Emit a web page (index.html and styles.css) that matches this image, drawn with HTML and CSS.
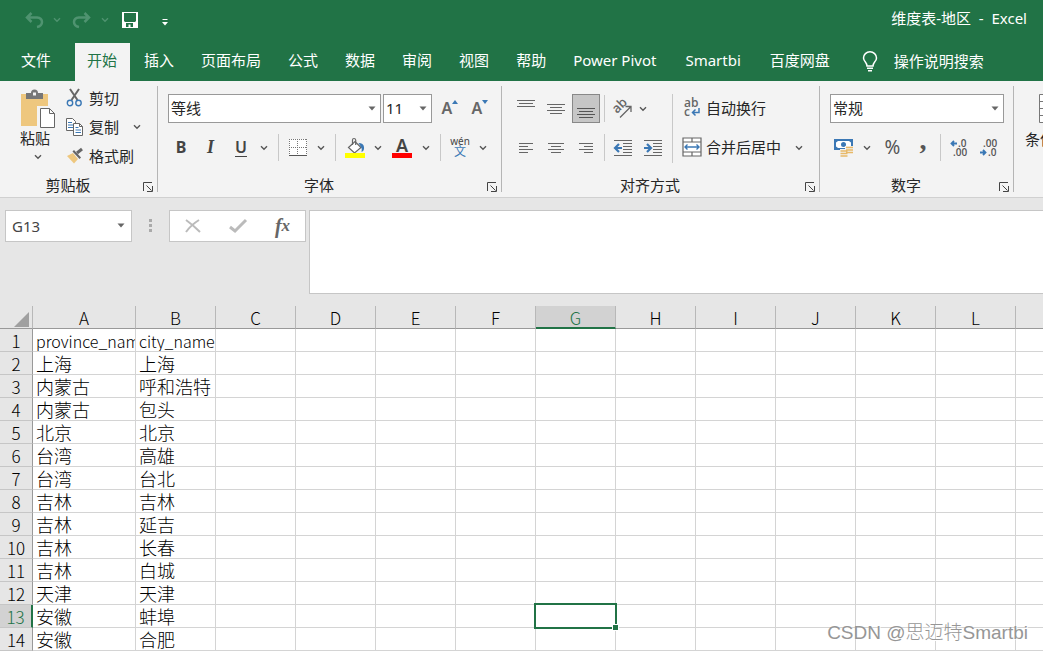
FILE: index.html
```html
<!DOCTYPE html>
<html lang="zh-CN">
<head>
<meta charset="utf-8">
<title>维度表-地区 - Excel</title>
<link rel="stylesheet" href="styles.css">
</head>
<body>
<svg class="defs" aria-hidden="true">
  <symbol id="chev" viewBox="0 0 8 6"><path d="M1 1.3 4 4.2 7 1.3" fill="none" stroke="currentColor" stroke-width="1.4"/></symbol>
  <symbol id="tri" viewBox="0 0 8 5"><path d="M0.5 0.5h7L4 4.5z" fill="currentColor"/></symbol>
  <symbol id="launch" viewBox="0 0 10 10"><path d="M.5 9V.5H9M3.5 3.5l5 5M9.5 4v5.5H4" fill="none" stroke="#444"/></symbol>
</svg>

<header class="titlebar">
  <div class="quick">
    <button class="q dim" aria-label="撤消"><svg width="18" height="16" viewBox="0 0 18 16"><path d="M6.500 1 2 5.500 6.500 10M2 5.500h10q5 .5 5 4.500t-5 5" fill="none" stroke="currentColor" stroke-width="2.500"/></svg></button>
    <button class="q dim small" aria-label="撤消选项"><svg width="8" height="6"><use href="#chev"/></svg></button>
    <button class="q dim" aria-label="恢复"><svg width="18" height="16" viewBox="0 0 18 16"><path d="M11.500 1 16 5.500 11.500 10M16 5.500H6q-5 .5-5 4.500t5 5" fill="none" stroke="currentColor" stroke-width="2.500"/></svg></button>
    <button class="q dim small" aria-label="恢复选项"><svg width="8" height="6"><use href="#chev"/></svg></button>
    <button class="q" aria-label="保存"><svg width="16" height="16" viewBox="0 0 16 16"><path fill-rule="evenodd" d="M0 0h16v16H0zM2 1v8l1 1h10l1-1V1zM4 11v4h2.500v-2.500h2V15H11v-4z" fill="#fff"/></svg></button>
    <button class="q custom" aria-label="自定义快速访问工具栏"><svg width="6" height="7" viewBox="0 0 6 7"><path d="M.5 .5h5" stroke="#fff"/><path d="M0 3h6L3 6.500z" fill="#fff"/></svg></button>
  </div>
  <h1 class="title">维度表-地区&nbsp; -&nbsp; Excel</h1>
</header>

<nav class="tabs">
  <button class="tab file">文件</button>
  <button class="tab active">开始</button>
  <button class="tab">插入</button>
  <button class="tab">页面布局</button>
  <button class="tab">公式</button>
  <button class="tab">数据</button>
  <button class="tab">审阅</button>
  <button class="tab">视图</button>
  <button class="tab">帮助</button>
  <button class="tab">Power Pivot</button>
  <button class="tab late">Smartbi</button>
  <button class="tab late">百度网盘</button>
  <button class="tell"><svg width="16" height="21" viewBox="0 0 16 21"><path d="M5 15q0-2-1.800-4.300A6 6 0 0 1 1.500 7a6.500 6.200 0 0 1 13 0q0 2-1.700 3.700Q11 13 11 15z" fill="none" stroke="#fff" stroke-width="1.500"/><path d="M5 17.300h6M6 19.700h4" stroke="#fff" stroke-width="1.400"/></svg>操作说明搜索</button>
</nav>

<main class="ribbon">
  <section class="group clip">
    <div class="tools">
      <button class="paste">
        <svg width="34" height="38" viewBox="0 0 34 38"><path d="M0 4h27v32H0z" fill="#eec77e"/><path d="M5 3h5a3.500 3.500 0 0 1 7 0h5v6H5z" fill="#777"/><path d="M12 2.500h3v3h-3z" fill="#f3f3f3"/><path d="M17.500 17.500h11l5 5.500v14.500h-16z" fill="#fff" stroke="#f3f3f3" stroke-width="3"/><path d="M19.500 18.500h9l5 5v14h-14zM28.500 18.500v5h5" fill="#fff" stroke="#666"/></svg>
        <span>粘贴</span>
        <svg class="pchev" width="8" height="6"><use href="#chev"/></svg>
      </button>
      <div class="stack">
        <button class="cmd"><svg width="18" height="18" viewBox="0 0 18 18"><path d="M4 0l7.500 11M13 0 5.500 11" stroke="#666" stroke-width="2"/><circle cx="4" cy="14" r="2.700" fill="none" stroke="#3b78b5" stroke-width="1.400"/><circle cx="12.500" cy="14" r="2.700" fill="none" stroke="#3b78b5" stroke-width="1.400"/></svg>剪切</button>
        <button class="cmd"><svg width="18" height="18" viewBox="0 0 18 18"><path d="M.5 .5h6l3 3v9h-9z" fill="#fff" stroke="#666"/><path d="M2 4.500h4M2 7h5M2 9.500h5" stroke="#3b78b5"/><path d="M7.500 5.500h6l3 3v9h-9z" fill="#fff" stroke="#666"/><path d="M13.500 5.500v3h3" fill="none" stroke="#666"/><path d="M9.500 9.500h3M9.500 12h5.500M9.500 14.500h5.500" stroke="#3b78b5"/></svg>复制<svg class="copychev" width="8" height="6"><use href="#chev"/></svg></button>
        <button class="cmd"><svg width="18" height="18" viewBox="0 0 18 18"><path d="M1 9l6-3 5 6-4 4.500z" fill="#eec77e"/><path d="M6.500 4.500l7 7.500 1.500-1.500-7-7.500z" fill="#666"/><path d="M11 6l5-4" stroke="#666" stroke-width="3"/></svg>格式刷</button>
      </div>
    </div>
    <footer class="gfoot"><span>剪贴板</span><button class="launcher" aria-label="剪贴板设置"><svg width="10" height="10"><use href="#launch"/></svg></button></footer>
  </section>

  <section class="group font">
    <div class="tools rows">
      <div class="row">
        <label class="sel fontname"><select aria-label="字体"><option>等线</option></select><svg width="8" height="5"><use href="#tri"/></svg></label>
        <label class="sel fontsize"><select aria-label="字号"><option>11</option></select><svg width="8" height="5"><use href="#tri"/></svg></label>
        <button class="b30 grow" aria-label="增大字号"><span class="bigA">A</span><svg width="6" height="4" viewBox="0 0 6 4"><path d="M0 4h6L3 0z" fill="#3b78b5"/></svg></button>
        <button class="b30 grow" aria-label="减小字号"><span class="bigA">A</span><svg width="6" height="4" viewBox="0 0 6 4"><path d="M0 0h6L3 4z" fill="#3b78b5"/></svg></button>
      </div>
      <div class="row">
        <button class="b26 bold">B</button>
        <button class="b33 ital">I</button>
        <button class="b28 under">U</button>
        <button class="chev" aria-label="下划线选项"><svg width="8" height="6"><use href="#chev"/></svg></button>
        <i class="sep"></i>
        <button class="b28" aria-label="边框"><svg width="18" height="18" viewBox="0 0 18 18"><path d="M0 0h18v17H0z" fill="#fff"/><path d="M0 .5h18M0 8.500h18M.5 0v16M8.500 0v16M17.500 0v16" stroke="#777" stroke-dasharray="1 1"/><path d="M0 16.500h18" stroke="#555"/></svg></button>
        <button class="chev" aria-label="边框选项"><svg width="8" height="6"><use href="#chev"/></svg></button>
        <i class="sep"></i>
        <button class="b28" aria-label="填充颜色"><svg width="20" height="20" viewBox="0 0 20 20"><path d="M3.500 9.500 10 3.500l6 6-6.500 5.500z" fill="#fff" stroke="#666" stroke-width="1.200"/><path d="M7.500 7V2q0-1.500 1.500-1.500T10.700 2v5" fill="none" stroke="#666" stroke-width="1.200"/><path d="M13.500 5q5 0 5.500 4t-2.500 5q1-3-.5-5z" fill="#3b78b5"/><path d="M0 15h20v5H0z" fill="#ff0"/></svg></button>
        <button class="chev" aria-label="填充选项"><svg width="8" height="6"><use href="#chev"/></svg></button>
        <button class="b30 fcolor" aria-label="字体颜色">A</button>
        <button class="chev" aria-label="字体颜色选项"><svg width="8" height="6"><use href="#chev"/></svg></button>
        <i class="sep"></i>
        <button class="b28 wen"><span>wén</span><b>文</b></button>
        <button class="chev" aria-label="拼音选项"><svg width="8" height="6"><use href="#chev"/></svg></button>
      </div>
    </div>
    <footer class="gfoot"><span>字体</span><button class="launcher" aria-label="字体设置"><svg width="10" height="10"><use href="#launch"/></svg></button></footer>
  </section>

  <section class="group align">
    <div class="tools">
      <div class="rows left">
        <div class="row">
          <button class="b30" aria-label="顶端对齐"><svg width="18" height="28"><path d="M0 5.500h18M2 8.500h14M0 11.500h18" stroke="#666"/></svg></button>
          <button class="b30" aria-label="垂直居中"><svg width="18" height="28"><path d="M0 9.500h18M3 12.500h12M0 15.500h18M3 18.500h12" stroke="#666"/></svg></button>
          <button class="b30 on" aria-label="底端对齐"><svg width="18" height="28"><path d="M0 13.500h18M2 16.500h14M0 19.500h18M2 22.500h14" stroke="#555"/></svg></button>
          <i class="sep s3"></i>
          <button class="b28" aria-label="方向"><svg width="20" height="20" viewBox="0 0 20 20"><text class="abtext" transform="translate(5 15) rotate(-45)">ab</text><path d="M8 18.500 18.500 8M13.500 7.500h5.500V13" fill="none" stroke="#666" stroke-width="1.300"/></svg></button>
          <button class="chev ochev" aria-label="方向选项"><svg width="8" height="6"><use href="#chev"/></svg></button>
        </div>
        <div class="row">
          <button class="b30" aria-label="左对齐"><svg width="14" height="12"><path d="M0 1.500h14M0 4.500h9M0 7.500h14M0 10.500h9" stroke="#666"/></svg></button>
          <button class="b30" aria-label="居中"><svg width="16" height="12"><path d="M0 1.500h16M3 4.500h10M0 7.500h16M3 10.500h10" stroke="#666"/></svg></button>
          <button class="b30" aria-label="右对齐"><svg width="14" height="12"><path d="M0 1.500h14M5 4.500h9M0 7.500h14M5 10.500h9" stroke="#666"/></svg></button>
          <i class="sep s3"></i>
          <button class="b30" aria-label="减少缩进量"><svg width="18" height="16" viewBox="0 0 18 16"><path d="M0 .5h18M9 3.500h9M9 6.500h9M9 9.500h9M9 12.500h9M0 15.500h18" stroke="#666"/><path d="M8 8H1.500M5 4 1 8l4 4" fill="none" stroke="#3b78b5" stroke-width="2.200"/></svg></button>
          <button class="b30" aria-label="增加缩进量"><svg width="18" height="16" viewBox="0 0 18 16"><path d="M0 .5h18M9 3.500h9M9 6.500h9M9 9.500h9M9 12.500h9M0 15.500h18" stroke="#666"/><path d="M0 8h6.500M3 4l4 4-4 4" fill="none" stroke="#3b78b5" stroke-width="2.200"/></svg></button>
        </div>
      </div>
      <i class="sep tall"></i>
      <div class="rows">
        <div class="row"><button class="cmd wide"><svg width="20" height="20" viewBox="0 0 20 20"><text class="wraptext" x="2" y="9">ab</text><text class="wraptext" x="2" y="18">c</text><path d="M17 10v4.500h-6M13.500 11.500l-3 3 3 3" fill="none" stroke="#3b78b5" stroke-width="1.500"/></svg>自动换行</button></div>
        <div class="row"><button class="cmd wide"><svg width="20" height="20" viewBox="0 0 20 20"><path d="M1 1h18v18H1zM1 5h18M1 15h18M10 1v4M10 15v4" fill="#fff" stroke="#666" stroke-width="1.200"/><path d="M3 10h14M5.500 7.500 3 10l2.500 2.500M14.500 7.500 17 10l-2.500 2.500" fill="none" stroke="#3b78b5" stroke-width="1.400"/></svg>合并后居中</button><button class="chev mchev" aria-label="合并选项"><svg width="8" height="6"><use href="#chev"/></svg></button></div>
      </div>
    </div>
    <footer class="gfoot"><span>对齐方式</span><button class="launcher" aria-label="对齐设置"><svg width="10" height="10"><use href="#launch"/></svg></button></footer>
  </section>

  <section class="group number">
    <div class="tools rows">
      <div class="row"><label class="sel numfmt"><select aria-label="数字格式"><option>常规</option></select><svg width="8" height="5"><use href="#tri"/></svg></label></div>
      <div class="row">
        <button class="b28" aria-label="会计数字格式"><svg width="20" height="20" viewBox="0 0 20 20"><path d="M0 1h19v11H0z" fill="#3b78b5"/><path d="M2 4.500 4 3h11l2 1.500v4L15 10H4L2 8.500z" fill="#fff"/><circle cx="9.500" cy="6.500" r="2.500" fill="#3b78b5"/><path d="M11 8h8v9h-5v3H6v-9h5z" fill="#f3f3f3"/><path d="M12 9.500h7M12 12h7M12 14.500h7M6.500 13h7M6.500 15.500h7M6.500 18h7" stroke="#e8b968" stroke-width="1.700"/></svg></button>
        <button class="chev" aria-label="会计格式选项"><svg width="8" height="6"><use href="#chev"/></svg></button>
        <button class="b33 pct">%</button>
        <button class="b28 comma">,</button>
        <i class="sep s3"></i>
        <button class="b30" aria-label="增加小数位数"><svg width="18" height="18" viewBox="0 0 18 18"><text class="dec" x="8" y="8">.0</text><text class="dec" x="3" y="17">.00</text><path d="M7 4.500H2M4 2 1.500 4.500 4 7" fill="none" stroke="#3b78b5" stroke-width="1.800"/></svg></button>
        <button class="b30" aria-label="减少小数位数"><svg width="18" height="18" viewBox="0 0 18 18"><text class="dec" x="3" y="8">.00</text><text class="dec" x="8" y="17">.0</text><path d="M0 13.500h5M3 11l2.500 2.500L3 16" fill="none" stroke="#3b78b5" stroke-width="1.800"/></svg></button>
      </div>
    </div>
    <footer class="gfoot"><span>数字</span><button class="launcher" aria-label="数字设置"><svg width="10" height="10"><use href="#launch"/></svg></button></footer>
  </section>

  <section class="group styles">
    <button class="cond"><svg width="32" height="29" viewBox="0 0 32 29"><path d="M.5 .5h31v28H.5zM0 7.500h32M0 14.500h32M0 21.500h32" fill="#fff" stroke="#777"/></svg><span>条件格式</span></button>
  </section>
</main>

<section class="fbar">
  <label class="namebox"><input aria-label="名称框" value="G13"><svg width="8" height="5"><use href="#tri"/></svg></label>
  <span class="dots"><i></i><i></i><i></i></span>
  <div class="fbtns">
    <button aria-label="取消"><svg width="16" height="14" viewBox="0 0 16 14"><path d="M1 1q7 5 14 12M14 1Q6 6 1 13" fill="none" stroke="#bbb" stroke-width="2"/></svg></button>
    <button aria-label="输入"><svg width="18" height="14" viewBox="0 0 18 14"><path d="M1 8l5 4L17 1" fill="none" stroke="#bbb" stroke-width="3"/></svg></button>
    <button class="fx">f<small>x</small></button>
  </div>
  <textarea class="formula" aria-label="编辑栏"></textarea>
</section>

<div class="sheet">
  <table class="grid">
    <colgroup><col class="c0"><col class="cA"><col span="12" class="cN"></colgroup>
    <thead><tr><th class="corner"><svg width="15" height="15"><path d="M15 0v15H0z" fill="#a0a0a0"/></svg></th><th>A</th><th>B</th><th>C</th><th>D</th><th>E</th><th>F</th><th class="hot">G</th><th>H</th><th>I</th><th>J</th><th>K</th><th>L</th><th></th></tr></thead>
    <tbody>
      <tr class="names"><th>1</th><td>province_name</td><td>city_name</td><td></td><td></td><td></td><td></td><td></td><td></td><td></td><td></td><td></td><td></td><td></td></tr>
      <tr><th>2</th><td>上海</td><td>上海</td><td></td><td></td><td></td><td></td><td></td><td></td><td></td><td></td><td></td><td></td><td></td></tr>
      <tr><th>3</th><td>内蒙古</td><td>呼和浩特</td><td></td><td></td><td></td><td></td><td></td><td></td><td></td><td></td><td></td><td></td><td></td></tr>
      <tr><th>4</th><td>内蒙古</td><td>包头</td><td></td><td></td><td></td><td></td><td></td><td></td><td></td><td></td><td></td><td></td><td></td></tr>
      <tr><th>5</th><td>北京</td><td>北京</td><td></td><td></td><td></td><td></td><td></td><td></td><td></td><td></td><td></td><td></td><td></td></tr>
      <tr><th>6</th><td>台湾</td><td>高雄</td><td></td><td></td><td></td><td></td><td></td><td></td><td></td><td></td><td></td><td></td><td></td></tr>
      <tr><th>7</th><td>台湾</td><td>台北</td><td></td><td></td><td></td><td></td><td></td><td></td><td></td><td></td><td></td><td></td><td></td></tr>
      <tr><th>8</th><td>吉林</td><td>吉林</td><td></td><td></td><td></td><td></td><td></td><td></td><td></td><td></td><td></td><td></td><td></td></tr>
      <tr><th>9</th><td>吉林</td><td>延吉</td><td></td><td></td><td></td><td></td><td></td><td></td><td></td><td></td><td></td><td></td><td></td></tr>
      <tr><th>10</th><td>吉林</td><td>长春</td><td></td><td></td><td></td><td></td><td></td><td></td><td></td><td></td><td></td><td></td><td></td></tr>
      <tr><th>11</th><td>吉林</td><td>白城</td><td></td><td></td><td></td><td></td><td></td><td></td><td></td><td></td><td></td><td></td><td></td></tr>
      <tr><th>12</th><td>天津</td><td>天津</td><td></td><td></td><td></td><td></td><td></td><td></td><td></td><td></td><td></td><td></td><td></td></tr>
      <tr><th class="hot">13</th><td>安徽</td><td>蚌埠</td><td></td><td></td><td></td><td></td><td class="cur"><span class="box"><i></i></span></td><td></td><td></td><td></td><td></td><td></td><td></td></tr>
      <tr><th>14</th><td>安徽</td><td>合肥</td><td></td><td></td><td></td><td></td><td></td><td></td><td></td><td></td><td></td><td></td><td></td></tr>
    </tbody>
  </table>
</div>
<div class="mark">CSDN @思迈特Smartbi</div>
</body>
</html>
```
FILE: styles.css
```css
* { box-sizing: border-box; }
body {
  margin: 0;
  height: 100vh;
  overflow: hidden;
  display: flex;
  flex-direction: column;
  position: relative;
  background: #fff;
  color: #262626;
  font: 15px/20px "Noto Sans", "Noto Sans CJK SC", sans-serif;
}
button, select, input, textarea { font: inherit; color: inherit; }
button {
  border: 0;
  padding: 0;
  background: none;
  display: flex;
  align-items: center;
  justify-content: center;
  white-space: nowrap;
}
svg { display: block; flex: none; overflow: visible; }
.defs { position: absolute; width: 0; height: 0; }

/* title bar */
.titlebar {
  flex: none;
  height: 43px;
  background: #217346;
  color: #fff;
  display: flex;
  justify-content: space-between;
  padding: 0 16px 0 25px;
}
.quick { display: flex; align-items: center; height: 40px; }
.q { width: 18px; }
.q.dim { color: #4f9370; }
.q.small { width: 28px; }
.q.small + .q { margin-left: 2px; }
.q.custom { margin-left: 17px; padding-top: 4px; }
.title { margin: 0; font-size: 15px; font-weight: 400; line-height: 36px; }

/* tabs */
.tabs {
  flex: none;
  height: 38px;
  background: #217346;
  color: #fff;
  display: flex;
  gap: 2px;
  padding-left: 9px;
}
.tab { padding: 0 13px 4px 12px; }
.tab.file { margin-right: 9px; }
.tab.late { padding: 0 13px 4px 14px; }
.tab.active { background: #f3f3f3; color: #217346; }
.tell { gap: 16px; margin-left: 17px; padding-bottom: 2px; }

/* ribbon */
.ribbon {
  flex: none;
  height: 117px;
  background: #f3f3f3;
  border-bottom: 1px solid #d0d0d0;
  display: flex;
  overflow: hidden;
}
.group {
  flex: none;
  position: relative;
  display: flex;
  flex-direction: column;
  padding-top: 13px;
}
.group:not(.styles)::after {
  content: "";
  position: absolute;
  right: 0;
  top: 5px;
  bottom: 5px;
  border-right: 1px solid #b5b5b5;
}
.clip { width: 158px; padding-top: 3px; }
.font { width: 344px; padding-left: 10px; }
.align { width: 318px; padding-left: 9px; }
.number { width: 194px; padding-left: 10px; }
.styles { width: 64px; padding-left: 11px; }
.tools { flex: 1; display: flex; }
.rows { display: flex; flex-direction: column; gap: 10px; }
.row { display: flex; align-items: center; height: 29px; }
.gfoot { height: 20px; margin: 0 0 2px; display: flex; align-items: center; }
.gfoot span { flex: 1; text-align: center; padding-right: 2px; }
.font .gfoot, .number .gfoot { margin-left: -10px; }
.align .gfoot { margin-left: -9px; }
.launcher { width: 20px; padding-top: 4px; }

.paste { flex-direction: column; justify-content: flex-start; width: 35px; margin: 6px 11px 0 20px; }
.paste span { align-self: flex-start; }
.pchev { margin-top: 6px; color: #555; }
.stack { display: flex; flex-direction: column; }
.cmd { gap: 5px; height: 29px; justify-content: flex-start; }
.cmd.wide { gap: 4px; padding-bottom: 2px; }
.copychev { margin-left: 9px; color: #555; }
.stack .cmd { height: 28px; }
.stack .cmd + .cmd { margin-top: 1px; }

.sel { position: relative; display: block; height: 29px; }
.sel select {
  appearance: none;
  width: 100%;
  height: 29px;
  margin: 0;
  padding: 0 2px 2px;
  border: 1px solid #999;
  border-radius: 0;
  background: #fff;
  outline: 0;
}
.sel svg, .namebox svg { position: absolute; right: 5px; top: 12px; color: #666; }
.namebox svg { right: 7px; top: 13px; }
.fontname { width: 213px; margin-right: 2px; }
.fontsize { width: 49px; margin-right: 3px; }
.numfmt { width: 174px; }

.b26 { width: 26px; height: 29px; }
.b28 { width: 28px; height: 29px; }
.b30 { width: 30px; height: 29px; }
.b33 { width: 33px; height: 29px; }
.chev { width: 18px; height: 29px; color: #555; }
.ochev { width: 14px; }
.sep { width: 1px; height: 27px; margin: 0 5px; background: #c8c8c8; }
.sep.s3 { margin: 0 3px; }
.sep.tall { height: 69px; margin: 0 9px 0 0; }
.left { width: 161px; }
.on { background: #c6c6c6; border: 1px solid #888; width: 28px; margin: 0 1px; }
.grow { color: #666; align-items: flex-start; }
.bigA { font-size: 16px; line-height: 28px; font-weight: 600; }
.grow svg { margin-top: 6px; }
.bold { color: #444; font-weight: 700; font-size: 16px; padding-bottom: 2px; }
.ital { color: #444; font: italic 700 18px "Liberation Serif", serif; }
.under { color: #444; font-weight: 600; font-size: 16px; padding-bottom: 2px; text-decoration: underline; text-underline-offset: 3px; }
.fcolor { color: #444; font-weight: 600; font-size: 18px; line-height: 15px; flex-direction: column; }
.fcolor::after { content: ""; width: 20px; height: 5px; background: #f00; }
.wen { flex-direction: column; font-size: 10px; line-height: 9px; color: #444; }
.wen b { font-weight: 400; font-size: 12px; line-height: 12px; color: #3b78b5; }
.abtext { font: 600 13px "Open Sans", sans-serif; fill: #666; }
.wraptext { font: 600 12px "Open Sans", sans-serif; fill: #666; }
.dec { font: 600 10px "Open Sans", sans-serif; fill: #555; }
.mchev { margin-left: 9px; }
.pct { color: #555; font-size: 19px; padding-bottom: 2px; }
.comma { color: #555; font: 700 28px/10px "Liberation Serif", serif; padding-bottom: 16px; }
.cond { flex-direction: column; align-items: center; width: 60px; }
.cond span { margin-top: 6px; }

/* formula bar */
.fbar {
  flex: none;
  height: 108px;
  background: #e6e6e6;
  display: flex;
  align-items: flex-start;
  padding: 12px 0 0 5px;
}
.namebox { position: relative; width: 127px; height: 32px; }
.namebox input {
  width: 100%;
  height: 32px;
  padding: 0 6px;
  border: 1px solid #c6c6c6;
  background: #fff;
  color: #444;
  outline: 0;
}
.dots { display: flex; flex-direction: column; gap: 2px; margin: 9px 17px 0; }
.dots i { width: 3px; height: 3px; background: #aaa; }
.fbtns {
  display: flex;
  justify-content: space-around;
  width: 137px;
  height: 32px;
  background: #fff;
  border: 1px solid #c6c6c6;
}
.fbtns button { width: 44px; }
.fbtns .fx { font: italic 700 20px "Liberation Serif", serif; color: #666; }
.fx small { font-size: 17px; }
.formula {
  flex: 1;
  height: 84px;
  margin-left: 3px;
  border: 1px solid #c6c6c6;
  border-right: 0;
  background: #fff;
  resize: none;
  outline: 0;
}

/* sheet */
.sheet { flex: 1; overflow: hidden; background: #fff; }
.grid {
  table-layout: fixed;
  width: 1096px;
  border-collapse: separate;
  border-spacing: 0;
  color: #000;
  font: 17px/20px "Noto Sans CJK SC", sans-serif;
}
.c0 { width: 33px; }
.cA { width: 103px; }
.cN { width: 80px; }
.grid th, .grid td { height: 23px; padding: 2px 0 0; overflow: hidden; white-space: nowrap; font-weight: 300; }
.grid th { background: #e6e6e6; border-right: 1px solid #b8b8b8; border-bottom: 1px solid #c6c6c6; }
.grid thead th { border-bottom-color: #999; }
.grid tbody th { border-right-color: #999; }
.grid td { border-right: 1px solid #d4d4d4; border-bottom: 1px solid #d4d4d4; padding: 0 0 0 3px; font-size: 18px; }
.grid .names td { font-size: 16px; padding-top: 2px; }
.corner svg { margin: 2px 0 0 14px; }
.grid th.hot { background: #d2d2d2; color: #217346; }
.grid thead th.hot { border-bottom: 2px solid #217346; line-height: 19px; }
.grid tbody th.hot { border-right: 2px solid #217346; }
.grid td.cur { position: relative; overflow: visible; }
.box { position: absolute; inset: -2px; border: 2px solid #217346; }
.box i {
  position: absolute;
  right: -4px;
  bottom: -4px;
  width: 7px;
  height: 7px;
  background: #217346;
  border: 1px solid #fff;
}
.mark {
  position: absolute;
  right: 15px;
  bottom: 6px;
  font: 19px/26px "Liberation Sans", "Noto Sans CJK SC", sans-serif;
  font-weight: 300;
  color: #969696;
  text-shadow: 1px 1px 0 #fff;
}
```
